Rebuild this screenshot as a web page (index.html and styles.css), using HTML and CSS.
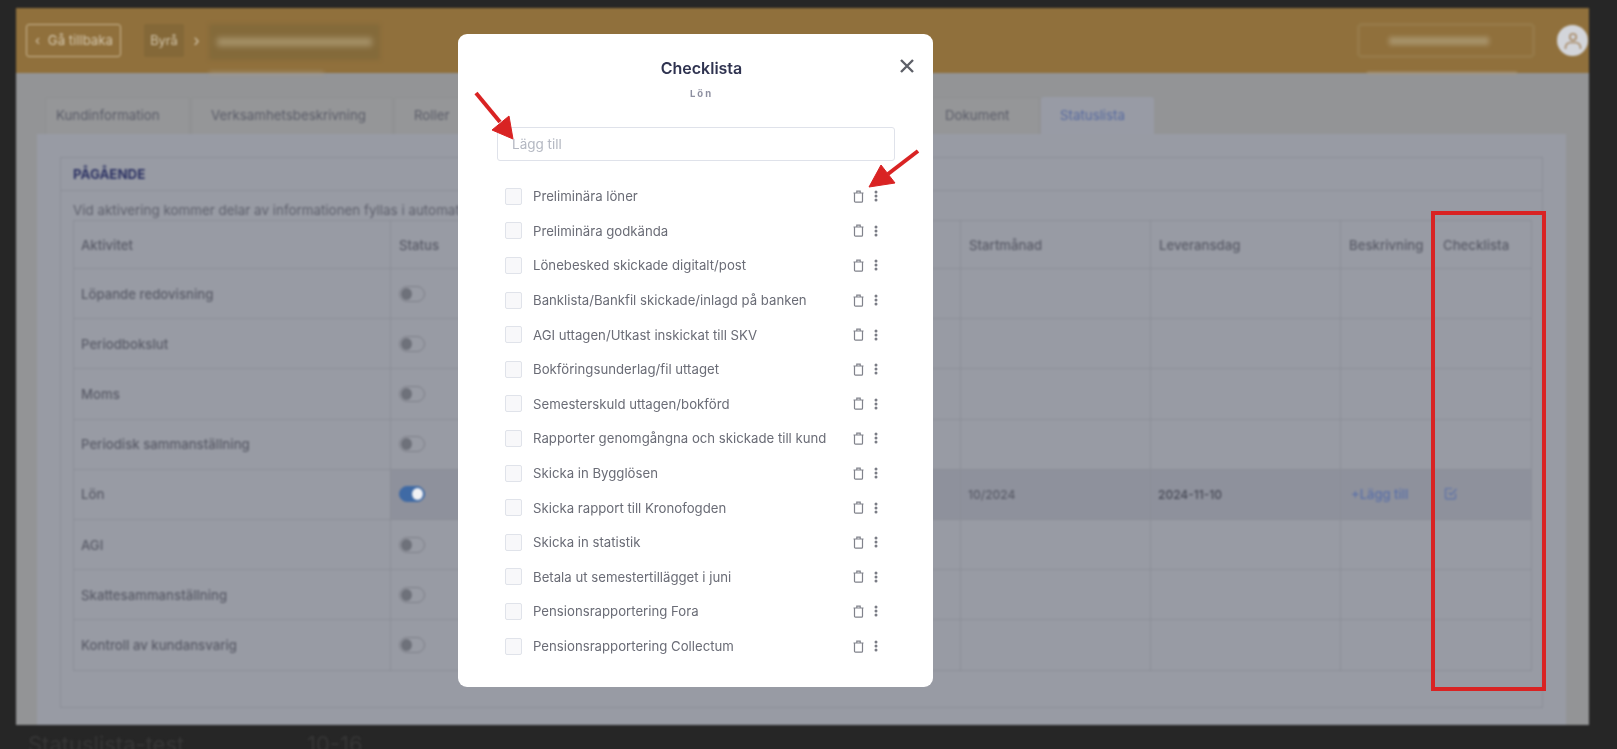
FILE: index.html
```html
<!DOCTYPE html>
<html lang="sv">
<head>
    <meta charset="UTF-8">
    <meta name="viewport" content="width=device-width, initial-scale=1.0">
    <title>Checklista</title>
    <link rel="stylesheet" href="styles.css">
</head>
<body>
    <div class="screen">
        <div class="window">
            <header class="topbar">
                <a class="back-btn"><span class="back-arrow">&#8249;</span> Gå tillbaka</a>
                <span class="crumb">Byrå</span>
                <span class="crumb-sep">&#8250;</span>
                <div class="crumb-hidden"><span class="smudge smudge-long"></span></div>
                <div class="company-box"><span class="smudge smudge-short"></span></div>
                <div class="avatar">
                    <svg width="22" height="22" viewBox="0 0 22 22" fill="none" stroke="#a88a66" stroke-width="1.6">
                        <circle cx="11" cy="7" r="3.2"/>
                        <path d="M3.5 19v-1.5c0-3 2.5-5 5-5h5c2.500 0 5 2 5 5V19"/>
                    </svg>
                </div>
            </header>

            <div class="content">
                <nav class="tabs">
                    <a class="tab">Kundinformation</a>
                    <a class="tab">Verksamhetsbeskrivning</a>
                    <a class="tab">Roller</a>
                    <span></span>
                    <a class="tab">Dokument</a>
                    <a class="tab tab-active">Statuslista</a>
                </nav>

                <section class="panel">
                    <div class="card">
                        <h2 class="card-head">PÅGÅENDE</h2>
                        <p class="card-desc">Vid aktivering kommer delar av informationen fyllas i automatiskt</p>
                        <table class="status-table">
                            <colgroup>
                                <col class="col-name">
                                <col class="col-status">
                                <col class="col-date">
                                <col class="col-date">
                                <col class="col-desc">
                                <col class="col-check">
                            </colgroup>
                            <thead>
                                <tr>
                                    <th>Aktivitet</th>
                                    <th>Status</th>
                                    <th>Startmånad</th>
                                    <th>Leveransdag</th>
                                    <th>Beskrivning</th>
                                    <th>Checklista</th>
                                </tr>
                            </thead>
                            <tbody>
                                <tr><td>Löpande redovisning</td><td><span class="toggle"></span></td><td></td><td></td><td></td><td></td></tr>
                                <tr><td>Periodbokslut</td><td><span class="toggle"></span></td><td></td><td></td><td></td><td></td></tr>
                                <tr><td>Moms</td><td><span class="toggle"></span></td><td></td><td></td><td></td><td></td></tr>
                                <tr><td>Periodisk sammanställning</td><td><span class="toggle"></span></td><td></td><td></td><td></td><td></td></tr>
                                <tr class="row-active">
                                    <td>Lön</td>
                                    <td><span class="toggle toggle-on"></span></td>
                                    <td class="num">10/2024</td>
                                    <td class="num num-dark">2024-11-10</td>
                                    <td><a class="add-link">+Lägg till</a></td>
                                    <td>
                                        <svg class="check-icon" width="14" height="14" viewBox="0 0 14 14" fill="none" stroke="#5a70a8" stroke-width="1.2">
                                            <path d="M11.500 7.500V12a.8.8 0 0 1-.8.8H2.300a.8.8 0 0 1-.8-.8V3.300a.8.8 0 0 1 .8-.8H8"/>
                                            <path d="M4.800 6.500l2.200 2.300 5.500-6"/>
                                        </svg>
                                    </td>
                                </tr>
                                <tr><td>AGI</td><td><span class="toggle"></span></td><td></td><td></td><td></td><td></td></tr>
                                <tr><td>Skattesammanställning</td><td><span class="toggle"></span></td><td></td><td></td><td></td><td></td></tr>
                                <tr><td>Kontroll av kundansvarig</td><td><span class="toggle"></span></td><td></td><td></td><td></td><td></td></tr>
                            </tbody>
                        </table>
                    </div>
                    <div class="card card-next"></div>
                </section>
            </div>
        </div>
        <div class="below">
            <span>Statuslista-test</span>
            <span>10-16</span>
        </div>

        <div class="modal">
            <button class="modal-close" aria-label="Stäng">
                <svg width="16" height="16" viewBox="0 0 16 16" fill="none" stroke="#5e6068" stroke-width="2.400">
                    <path d="M2 2l12 12M14 2L2 14"/>
                </svg>
            </button>
            <h3 class="modal-title">Checklista</h3>
            <div class="modal-sub">Lön</div>
            <input class="modal-input" type="text" placeholder="Lägg till">
            <ul class="check-list" id="checkList"></ul>
        </div>

        <!-- markeringar ovanpå skärmbilden -->
        <div class="mark-rect"></div>
        <svg class="mark-arrows" width="1617" height="749" viewBox="0 0 1617 749">
            <g fill="#d92323" stroke="#d92323">
                <path d="M476 93L500 122" stroke-width="4" fill="none"/>
                <path d="M513 139L492 130L509 116Z" stroke-width="1"/>
                <path d="M918 151L888 174" stroke-width="4" fill="none"/>
                <path d="M869 187L881 165L895 183Z" stroke-width="1"/>
            </g>
        </svg>
    </div>

    <script>
        // Fyller checklistan i modalen
        const items = [
            "Preliminära löner",
            "Preliminära godkända",
            "Lönebesked skickade digitalt/post",
            "Banklista/Bankfil skickade/inlagd på banken",
            "AGI uttagen/Utkast inskickat till SKV",
            "Bokföringsunderlag/fil uttaget",
            "Semesterskuld uttagen/bokförd",
            "Rapporter genomgångna och skickade till kund",
            "Skicka in Bygglösen",
            "Skicka rapport till Kronofogden",
            "Skicka in statistik",
            "Betala ut semestertillägget i juni",
            "Pensionsrapportering Fora",
            "Pensionsrapportering Collectum"
        ];
        const trash = '<svg width="11" height="13" viewBox="0 0 11 13" fill="none" stroke="#80828b" stroke-width="1.2"><path d="M1.500 3h8v8.200a1 1 0 0 1-1 1h-6a1 1 0 0 1-1-1zM.5 3h10M3.800 3V1.200h3.400V3"/></svg>';
        const kebab = '<svg width="4" height="12" viewBox="0 0 4 12" fill="#7a7c85"><circle cx="2" cy="2" r="1.500"/><circle cx="2" cy="6" r="1.500"/><circle cx="2" cy="10" r="1.500"/></svg>';
        const list = document.getElementById("checkList");
        items.forEach(function(text) {
            const li = document.createElement("li");
            li.className = "check-row";
            li.innerHTML = '<span class="check-box"></span><span class="check-text">' + text + '</span>' +
                '<span class="check-actions">' + trash + kebab + '</span>';
            list.appendChild(li);
        });
    </script>
</body>
</html>
```

FILE: styles.css
```css
* {
    box-sizing: border-box;
}
body {
    margin: 0;
    background-color: #262626;
    font-family: Inter, "Open Sans", sans-serif;
    overflow: hidden;
}
.screen {
    position: relative;
    width: 1617px;
    height: 749px;
    padding: 8px 28px 0 16px;
    overflow: hidden;
}
.window {
    height: 717px;
    background-color: #939496;
    overflow: hidden;
    filter: blur(0.9px);
}

/* topbar */
.topbar {
    display: flex;
    align-items: center;
    height: 65px;
    padding: 0 0 0 10px;
    background-color: #90703c;
}
.back-btn {
    width: 95px;
    height: 33px;
    border: 1px solid #c8b692;
    border-radius: 3px;
    color: #d3c6ac;
    font-size: 13.200px;
    line-height: 31px;
    padding-left: 8px;
}
.back-arrow {
    margin-right: 4px;
}
.crumb {
    width: 40px;
    height: 33px;
    margin-left: 23px;
    background-color: #846838;
    color: #d3c6ac;
    font-size: 12.800px;
    line-height: 33px;
    text-align: center;
    border-radius: 2px;
}
.crumb-sep {
    width: 25px;
    text-align: center;
    color: #d3c6ac;
    font-size: 16px;
    margin-top: -2px;
}
.crumb-hidden {
    position: relative;
    display: flex;
    align-items: center;
    justify-content: center;
    width: 171px;
    height: 36px;
    margin-top: 3px;
    background-color: #846a3a;
    filter: blur(2px);
}
.crumb-hidden::after {
    content: "";
    position: absolute;
    top: 48px;
    left: 0;
    width: 115px;
    height: 2px;
    background-color: #a89a80;
}
.smudge {
    display: block;
    height: 8px;
    background-color: #a8946c;
    filter: blur(2px);
}
.smudge-long {
    width: 155px;
}
.smudge-short {
    width: 100px;
    margin-left: 30px;
}
.company-box {
    position: relative;
    display: flex;
    align-items: center;
    width: 176px;
    height: 33px;
    margin-left: auto;
    border: 1px solid #a38e62;
    border-radius: 3px;
    filter: blur(1px);
}
.company-box::after {
    content: "";
    position: absolute;
    top: 47px;
    left: 8px;
    width: 150px;
    height: 2px;
    background-color: #a89a80;
}
.avatar {
    display: flex;
    align-items: center;
    justify-content: center;
    width: 31px;
    height: 31px;
    margin: 0 1px 0 23px;
    border-radius: 50%;
    background-color: #d3d5da;
}

/* flikar */
.content {
    padding: 24px 23px 0 21px;
}
.tabs {
    display: grid;
    grid-template-columns: 145px 202px 86px 449px 109px 113px;
    column-gap: 1px;
    height: 37px;
    padding-left: 8px;
    font-size: 13.300px;
}
.tab {
    padding-left: 10px;
    border: 1px solid #8f9092;
    border-bottom: none;
    line-height: 35px;
    color: #5a5c68;
    background-color: #959698;
    border-radius: 3px 3px 0 0;
    white-space: nowrap;
}
.tab:nth-child(2) {
    padding-left: 19px;
}
.tab:nth-child(3) {
    padding-left: 19px;
}
.tab:nth-child(5) {
    padding-left: 13px;
}
.tab-active {
    padding-left: 18px;
    border-color: #989ba5;
    background-color: #989ba5;
    color: #56699f;
}
.panel {
    padding: 23px 23px 0;
    background-color: #989ba4;
}

/* kort och tabell */
.card {
    border: 1px solid #8b8e97;
    padding: 0 12px 36px;
}
.card-next {
    height: 40px;
    margin-top: 18px;
}
.card-head {
    margin: 0 -12px;
    height: 33px;
    padding-left: 12px;
    border-bottom: 1px solid #8b8e97;
    color: #2d3364;
    font-size: 13.300px;
    font-weight: 700;
    line-height: 32px;
}
.card-desc {
    margin: 0;
    height: 29px;
    padding-top: 11px;
    color: #5e606c;
    font-size: 13.400px;
    line-height: 17px;
    white-space: nowrap;
}
.status-table {
    width: 1458px;
    table-layout: fixed;
    border-collapse: collapse;
    font-size: 13.200px;
    color: #5a5c68;
}
.col-name {
    width: 317px;
}
.col-status {
    width: 570px;
}
.col-date {
    width: 190px;
}
.col-desc {
    width: 93px;
}
.col-check {
    width: 98px;
}
.status-table th,
.status-table td {
    height: 50.200px;
    padding: 0 0 0 8px;
    border: 1px solid #8b8e97;
    text-align: left;
    font-weight: 500;
}
.status-table th {
    height: 48px;
}
.status-table th:first-child,
.status-table td:first-child {
    padding-left: 7px;
}
.status-table th:last-child,
.status-table td:last-child {
    padding-left: 9px;
}
.status-table .num {
    padding-left: 7px;
    font-size: 12px;
}
.status-table .num-dark {
    color: #474955;
}
.row-active td:not(:first-child) {
    background-color: #8e919c;
}
.add-link {
    margin-left: 2px;
    color: #5a70a8;
    font-size: 13px;
}
.check-icon {
    display: block;
    margin-top: -2px;
    margin-left: 1px;
}
.toggle {
    position: relative;
    display: block;
    width: 26px;
    height: 16px;
    border: 1px solid #7e8089;
    border-radius: 8px;
}
.toggle::after {
    content: "";
    position: absolute;
    top: 1px;
    left: 1px;
    width: 11px;
    height: 12px;
    border-radius: 50%;
    background-color: #6e717a;
}
.toggle-on {
    background-color: #3f6aa5;
    border-color: #3f6aa5;
}
.toggle-on::after {
    left: auto;
    right: 1px;
    background-color: #f2f2f4;
}

/* text under fönstret */
.below {
    display: flex;
    height: 24px;
    padding-left: 12px;
    color: #363636;
    font-size: 22px;
    line-height: 38px;
    filter: blur(1px);
}
.below span:first-child {
    width: 279px;
}

/* modal */
.modal {
    position: absolute;
    top: 34px;
    left: 458px;
    width: 475px;
    height: 653px;
    padding-top: 24px;
    background-color: #fff;
    border-radius: 9px;
    filter: blur(0.6px);
}
.modal-title {
    margin: 0;
    padding-left: 12px;
    color: #2f3350;
    font-size: 16px;
    font-weight: 600;
    line-height: 20px;
    text-align: center;
}
.modal-sub {
    margin-top: 10px;
    padding-left: 12px;
    color: #8d8fa0;
    font-size: 9.500px;
    font-weight: 700;
    letter-spacing: 2px;
    line-height: 12px;
    text-align: center;
}
.modal-close {
    position: absolute;
    top: 24px;
    right: 18px;
    padding: 0;
    border: none;
    background: none;
}
.modal-input {
    display: block;
    width: 398px;
    height: 34px;
    margin: 27px 0 0 39px;
    padding: 0 14px;
    border: 1px solid #dfe2ea;
    border-radius: 3px;
    font-family: inherit;
    font-size: 13.500px;
}
.modal-input::placeholder {
    color: #b4b8c2;
}
.check-list {
    margin: 18px 0 0;
    padding: 0 55px 0 47px;
    list-style: none;
}
.check-row {
    display: flex;
    align-items: center;
    height: 34.600px;
}
.check-box {
    width: 17px;
    height: 17px;
    margin-right: 11px;
    border: 1px solid #e0e3ea;
    border-radius: 2px;
    background-color: #f8f8fa;
}
.check-text {
    flex: 1;
    color: #6a6c76;
    font-size: 13.200px;
    white-space: nowrap;
}
.check-actions {
    display: flex;
    align-items: center;
    gap: 10px;
}

/* röda markeringar */
.mark-rect {
    position: absolute;
    top: 211px;
    left: 1431px;
    width: 115px;
    height: 480px;
    border: 4px solid #d92323;
}
.mark-arrows {
    position: absolute;
    top: 0;
    left: 0;
}
```
